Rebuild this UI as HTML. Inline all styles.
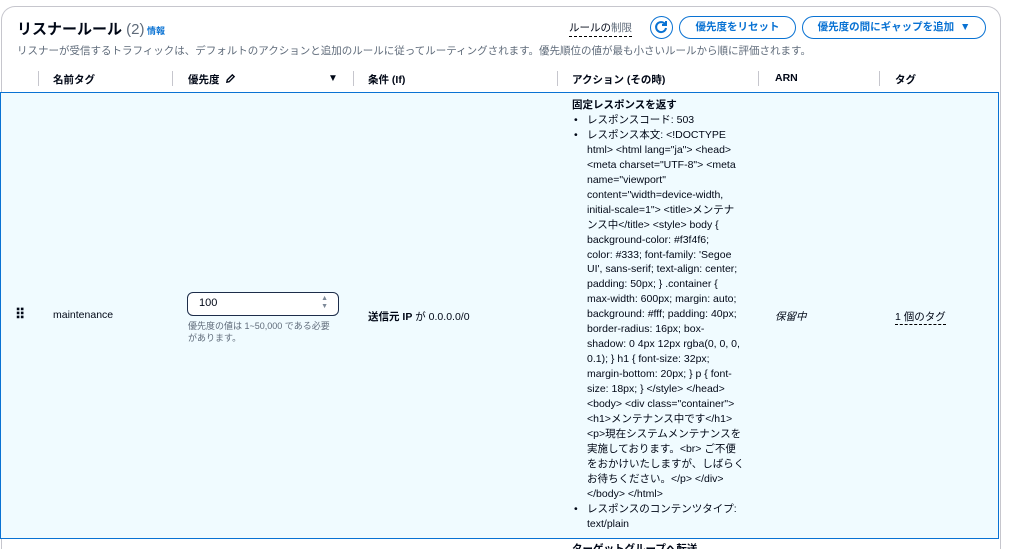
<!DOCTYPE html>
<html><head><meta charset="utf-8"><style>
*{margin:0;padding:0;box-sizing:border-box}
html,body{width:1010px;height:549px;overflow:hidden}
body{background:#fff;font-family:"Liberation Sans","Noto Sans CJK JP",sans-serif;color:#000716;position:relative}
.card{position:absolute;left:1px;top:6px;width:1000px;height:543px;border:1px solid #c6c6cd;border-bottom:none;border-radius:14px 14px 0 0}
.a{position:absolute;white-space:nowrap}
.title{left:17px;top:18px;font-size:15px;font-weight:bold}
.title span{font-weight:normal;color:#5f6b7a}
.info{left:147px;top:24px;font-size:9px;color:#0972d3;font-weight:bold}
.desc{left:17px;top:43px;font-size:10.5px;color:#5f6b7a}
.btn{position:absolute;top:16px;height:23px;border:1.5px solid #0972d3;border-radius:12px;color:#0972d3;font-size:10.5px;font-weight:bold;text-align:center;line-height:20px}
.hd{top:72px;font-size:10.5px;font-weight:bold}
.sep{position:absolute;top:71px;width:1px;height:15px;background:#c6c6cd}
.row{position:absolute;left:0;top:92px;width:999px;height:447px;background:#f0fbff;border:1.5px solid #0972d3;border-top:1px solid #0972d3}
.act{position:absolute;left:572px;top:98px;font-size:10.5px;line-height:14.95px;white-space:nowrap}
.act ul{list-style:none}
.act li{position:relative;padding-left:15px}
.act li:before{content:"•";position:absolute;left:2px}
.inp{position:absolute;left:187px;top:292px;width:152px;height:24px;border:1.5px solid #1d2d4a;border-radius:6px;background:#fff;font-size:11px;padding:4px 11px}
</style></head><body>
<div class="card"></div>
<div class="a title">リスナールール <span>(2)</span></div>
<div class="a info">情報</div>
<div class="a desc">リスナーが受信するトラフィックは、デフォルトのアクションと追加のルールに従ってルーティングされます。優先順位の値が最も小さいルールから順に評価されます。</div>
<div class="a" style="left:569px;top:20px;font-size:10.5px;border-bottom:1px dashed #000;padding-bottom:1px">ルールの<span style="color:#5f6b7a">制限</span></div>
<div style="position:absolute;left:650px;top:16px;width:23px;height:23px;border:1.5px solid #0972d3;border-radius:50%"><svg width="20" height="20" viewBox="0 0 20 20" style="position:absolute;left:0;top:0"><path d="M14 7A5 5 0 1 0 15 11" fill="none" stroke="#0972d3" stroke-width="2"/><path d="M15 4v4h-4" fill="none" stroke="#0972d3" stroke-width="2"/></svg></div>
<div class="btn" style="left:679px;width:117px">優先度をリセット</div>
<div class="btn" style="left:802px;width:184px">優先度の間にギャップを追加 &nbsp;▼</div>
<div class="sep" style="left:38px"></div><div class="sep" style="left:172px"></div><div class="sep" style="left:353px"></div><div class="sep" style="left:557px"></div><div class="sep" style="left:758px"></div><div class="sep" style="left:879px"></div>
<div class="a hd" style="left:53px">名前タグ</div>
<div class="a hd" style="left:188px">優先度 <svg width="11" height="11" viewBox="0 0 12 12" style="vertical-align:-1px;margin-left:3px"><path d="M2 10l.5-2.5L8 2l2 2-5.5 5.5z" fill="none" stroke="#000716" stroke-width="1.5"/></svg></div>
<div class="a hd" style="left:328px;top:73px;font-size:10px">▼</div>
<div class="a hd" style="left:368px">条件 (If)</div>
<div class="a hd" style="left:572px">アクション (その時)</div>
<div class="a hd" style="left:775px">ARN</div>
<div class="a hd" style="left:895px">タグ</div>
<div class="row"></div>
<div class="a" style="left:15px;top:306px;font-size:14px;font-weight:bold;letter-spacing:-1px">⠿</div>
<div class="a" style="left:53px;top:309px;font-size:10.5px">maintenance</div>
<div class="inp">100<span style="position:absolute;right:10px;top:2px;font-size:7px;line-height:8px;color:#7d8998">▲<br>▼</span></div>
<div class="a" style="left:188px;top:320px;font-size:9px;color:#5f6b7a;line-height:12px">優先度の値は 1~50,000 である必要<br>があります。</div>
<div class="a" style="left:368px;top:309px;font-size:10.5px"><b>送信元 IP</b> が 0.0.0.0/0</div>
<div class="a" style="left:775px;top:309px;font-size:10.5px;font-style:italic">保留中</div>
<div class="a" style="left:895px;top:309px;font-size:10.5px;border-bottom:1px dashed #000">1 個のタグ</div>
<div class="act"><b>固定レスポンスを返す</b>
<ul><li>レスポンスコード: 503</li>
<li>レスポンス本文: &lt;!DOCTYPE<br>html&gt; &lt;html lang="ja"&gt; &lt;head&gt;<br>&lt;meta charset="UTF-8"&gt; &lt;meta<br>name="viewport"<br>content="width=device-width,<br>initial-scale=1"&gt; &lt;title&gt;メンテナ<br>ンス中&lt;/title&gt; &lt;style&gt; body {<br>background-color: #f3f4f6;<br>color: #333; font-family: 'Segoe<br>UI', sans-serif; text-align: center;<br>padding: 50px; } .container {<br>max-width: 600px; margin: auto;<br>background: #fff; padding: 40px;<br>border-radius: 16px; box-<br>shadow: 0 4px 12px rgba(0, 0, 0,<br>0.1); } h1 { font-size: 32px;<br>margin-bottom: 20px; } p { font-<br>size: 18px; } &lt;/style&gt; &lt;/head&gt;<br>&lt;body&gt; &lt;div class="container"&gt;<br>&lt;h1&gt;メンテナンス中です&lt;/h1&gt;<br>&lt;p&gt;現在システムメンテナンスを<br>実施しております。&lt;br&gt; ご不便<br>をおかけいたしますが、しばらく<br>お待ちください。&lt;/p&gt; &lt;/div&gt;<br>&lt;/body&gt; &lt;/html&gt;</li>
<li>レスポンスのコンテンツタイプ:<br>text/plain</li></ul></div>
<div style="position:absolute;left:572px;top:543px;width:200px;height:6px;overflow:hidden"><div style="font-size:10.5px;font-weight:bold;white-space:nowrap;line-height:12px">ターゲットグループへ転送</div></div>
</body></html>
